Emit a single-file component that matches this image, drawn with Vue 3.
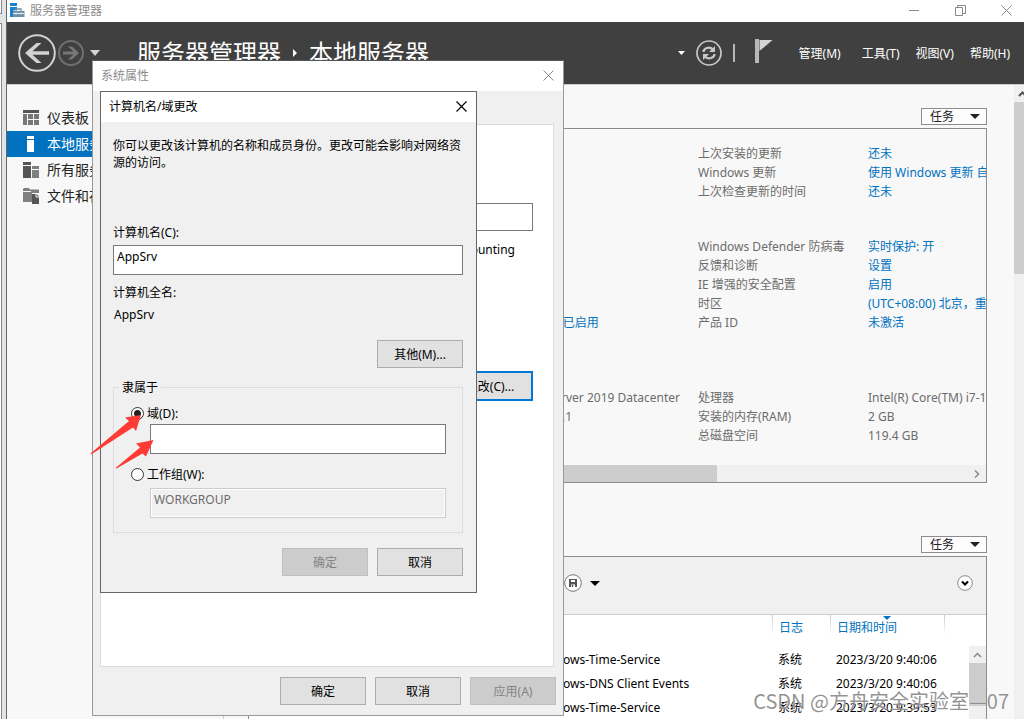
<script setup>
import { ref } from 'vue'

const computerName = ref('AppSrv')
const domain = ref('')
const membership = ref('domain')

const navItems = [
  { id: 'dash', label: '仪表板' },
  { id: 'local', label: '本地服务器', active: true },
  { id: 'all', label: '所有服务器' },
  { id: 'files', label: '文件和存储服务' },
]

const menus = ['工具(T)', '视图(V)', '帮助(H)']

const groups = [
  {
    id: 'updates',
    rows: [
      { label: '上次安装的更新', value: '还未', link: true },
      { label: 'Windows 更新', value: '使用 Windows 更新 自动下载更新', link: true },
      { label: '上次检查更新的时间', value: '还未', link: true },
    ],
  },
  {
    id: 'security',
    rows: [
      { label: 'Windows Defender 防病毒', value: '实时保护: 开', link: true },
      { label: '反馈和诊断', value: '设置', link: true },
      { label: 'IE 增强的安全配置', value: '启用', link: true },
      { label: '时区', value: '(UTC+08:00) 北京，重庆，香港', link: true },
      { left: '192.168.100.101, IPv6 已启用', leftLink: true, label: '产品 ID', value: '未激活', link: true },
    ],
  },
  {
    id: 'hardware',
    rows: [
      { left: 'Microsoft Windows Server 2019 Datacenter', label: '处理器', value: 'Intel(R) Core(TM) i7-10750H' },
      { left: 'VMware Inc. VMware7,1', label: '安装的内存(RAM)', value: '2 GB' },
      { label: '总磁盘空间', value: '119.4 GB' },
    ],
  },
]

const events = [
  { source: 'Microsoft-Windows-Time-Service', log: '系统', date: '2023/3/20 9:40:06' },
  { source: 'Microsoft-Windows-DNS Client Events', log: '系统', date: '2023/3/20 9:40:06' },
  { source: 'Microsoft-Windows-Time-Service', log: '系统', date: '2023/3/20 9:39:53' },
]
</script>

<template>
  <div class="desktop">
    <div class="edge"><i class="edge-top"></i><i class="edge-rest"></i></div>

    <div class="manager">
      <header class="titlebar">
        <svg class="app-icon" width="15" height="15" viewBox="0 0 15 15">
          <path d="M0 0h7v3H0zM0 4h7v2L3 8v6H0z" fill="#1583d0" />
          <path d="M3 8h11.500v6H3z" fill="#6f90a5" />
          <path d="M6 8V6h5v2" fill="none" stroke="#6f90a5" stroke-width="1.300" />
          <path d="M3 10.500h11.500M6 9.500v2M11 9.500v2" stroke="#e6eef2" stroke-width="1" />
        </svg>
        <span class="app-title">服务器管理器</span>
        <div class="controls">
          <button type="button" aria-label="最小化"><svg width="11" height="11"><path d="M0 5.500h10" stroke="#888" /></svg></button>
          <button type="button" aria-label="还原"><svg width="11" height="11"><path d="M.5 2.500h7v8h-7zM2.500 2.500v-2h8v8h-3" fill="none" stroke="#888" /></svg></button>
          <button type="button" aria-label="关闭"><svg width="11" height="11"><path d="M.5.5l10 10M10.500.5l-10 10" stroke="#888" /></svg></button>
        </div>
      </header>

      <div class="banner">
        <button type="button" class="round" aria-label="后退">
          <svg width="38" height="38" viewBox="0 0 38 38">
            <circle cx="19" cy="19" r="17.800" fill="none" stroke="#d2d2d2" stroke-width="2" />
            <path d="M31 17.200H14.500L23.500 9h-5L7 19l11.500 10h5L14.500 20.800H31z" fill="#d2d2d2" />
          </svg>
        </button>
        <button type="button" class="round forward" aria-label="前进">
          <svg width="26" height="26" viewBox="0 0 26 26">
            <circle cx="13" cy="13" r="12" fill="none" stroke="#707070" stroke-width="2" />
            <path d="M5 11.500h10.500L10 6.500h4L21 13l-7 6.500h-4l5.500-5H5z" fill="#777" />
          </svg>
        </button>
        <svg class="history" width="10" height="6"><path d="M0 0h10L5 6z" fill="#d2d2d2" /></svg>
        <h1 class="crumbs">
          <span>服务器管理器</span>
          <svg width="4" height="8"><path d="M0 0l4 4-4 4z" fill="#fff" /></svg>
          <span>本地服务器</span>
        </h1>
        <div class="tools">
          <svg width="8" height="4"><path d="M0 0h7L3.500 4z" fill="#fff" /></svg>
          <button type="button" class="round refresh" aria-label="刷新">
            <svg width="26" height="26" viewBox="0 0 26 26">
              <circle cx="13" cy="13" r="12" fill="none" stroke="#c8c8c8" stroke-width="1.700" />
              <path d="M7.500 12c0-4 6-6 9.500-2.500M18.500 14c0 4-6 6-9.500 2.500" fill="none" stroke="#c8c8c8" stroke-width="2.200" />
              <path d="M19 6v6h-6zM7 20v-6h6z" fill="#c8c8c8" />
            </svg>
          </button>
          <i class="divider"></i>
          <button type="button" class="round flag" aria-label="通知">
            <svg width="18" height="24" viewBox="0 0 18 24">
              <path d="M0 0h4v24H0z" fill="#b8b8b8" />
              <path d="M4.500 1H17.500L4.500 12z" fill="#d4d4d4" />
            </svg>
          </button>
          <button type="button" class="menu manage">管理(M)</button>
          <button v-for="m in menus" :key="m" type="button" class="menu">{{ m }}</button>
        </div>
      </div>

      <div class="body">
        <nav class="sidebar">
          <a v-for="n in navItems" :key="n.id" href="#" :class="['nav', { active: n.active }]">
            <svg width="16" height="16" viewBox="0 0 16 16">
              <g v-if="n.id === 'dash'">
                <path d="M0 0h16v3H0z" fill="#555" />
                <path d="M0 4h4v11H0zM5 4h5v5H5zM11 4h5v5h-5zM5 10h5v5H5zM11 10h5v5h-5z" fill="#777" />
              </g>
              <path v-else-if="n.id === 'local'" d="M4 0h7v3H4zM4 4h7v12H4z" fill="#fff" />
              <g v-else-if="n.id === 'all'">
                <path d="M0 0h8v3H0zM0 4h8v12H0z" fill="#555" />
                <path d="M9 4h7v3H9zM9 8h7v8H9z" fill="#808080" />
              </g>
              <g v-else>
                <path d="M0 1l1-1h5l1 1.500h9V5H9v9H0V4h8V3H0z" fill="#808080" />
                <path d="M9 6h4.500L16 8.500V16H9z" fill="#555" />
                <path d="M13 6v3h3" fill="none" stroke="#f8f8f8" />
              </g>
            </svg>
            <span>{{ n.label }}</span>
          </a>
        </nav>

        <main class="content">
          <section>
            <div class="section-head">
              <button type="button" class="tasks">任务<svg width="10" height="5"><path d="M0 0h10L5 5z" fill="#222" /></svg></button>
            </div>
            <div class="panel props">
              <div v-for="g in groups" :key="g.id" :class="['group', g.id]">
                <div v-for="r in g.rows" :key="r.label" class="row">
                  <span class="left" :class="{ link: r.leftLink }">{{ r.left }}</span>
                  <span>{{ r.label }}</span>
                  <a v-if="r.link" href="#" class="link">{{ r.value }}</a>
                  <span v-else>{{ r.value }}</span>
                </div>
              </div>
              <div class="hscroll">
                <i></i>
                <svg width="6" height="8"><path d="M1 .5L4.500 4 1 7.500" fill="none" stroke="#888" stroke-width="1.500" /></svg>
              </div>
            </div>
          </section>

          <section class="events">
            <div class="section-head">
              <button type="button" class="tasks">任务<svg width="10" height="5"><path d="M0 0h10L5 5z" fill="#222" /></svg></button>
            </div>
            <div class="panel">
              <div class="toolbar">
                <button type="button" class="round save" aria-label="保存查询">
                  <svg width="18" height="18" viewBox="0 0 18 18">
                    <circle cx="9" cy="9" r="8.300" fill="#fff" stroke="#777" />
                    <path d="M5 5h8v8H5z" fill="#555" />
                    <path d="M7 6h4v2H7zM7 10.500h4V13H7z" fill="#fff" />
                    <path d="M7.800 11h1.400v2H7.800z" fill="#555" />
                  </svg>
                </button>
                <svg width="10" height="5"><path d="M0 0h10L5 5z" fill="#000" /></svg>
                <button type="button" class="round expand" aria-label="展开">
                  <svg width="16" height="16" viewBox="0 0 16 16">
                    <circle cx="8" cy="8" r="7.300" fill="#fff" stroke="#888" />
                    <path d="M5 6.500l3 3 3-3" fill="none" stroke="#000" stroke-width="2" />
                  </svg>
                </button>
              </div>
              <div class="table-wrap">
                <table>
                  <thead>
                    <tr>
                      <th class="source"></th>
                      <th class="log">日志</th>
                      <th class="date">日期和时间<svg class="sort" width="8" height="4"><path d="M0 0h8L4 4z" fill="#0072c6" /></svg></th>
                      <th class="end"></th>
                    </tr>
                  </thead>
                  <tbody>
                    <tr v-for="(e, i) in events" :key="i">
                      <td class="source">{{ e.source }}</td>
                      <td>{{ e.log }}</td>
                      <td>{{ e.date }}</td>
                      <td></td>
                    </tr>
                  </tbody>
                </table>
                <div class="inner-scroll">
                  <svg width="9" height="6"><path d="M1 5l3.500-3.500L8 5" fill="none" stroke="#888" stroke-width="1.500" /></svg>
                  <i></i>
                </div>
              </div>
            </div>
          </section>
        </main>

        <div class="vscroll">
          <svg width="10" height="17"><path d="M5 11l3.500-3.500L12 11" fill="none" stroke="#555" stroke-width="2" /></svg>
          <i></i>
        </div>
      </div>
    </div>

    <section class="dialog system" aria-label="系统属性">
      <header class="dialog-title muted">
        <h2>系统属性</h2>
        <button type="button" aria-label="关闭"><svg width="11" height="11"><path d="M.5.5l10 10M10.500.5l-10 10" stroke="#888" /></svg></button>
      </header>
      <div class="tab-page">
        <input class="description" type="text" aria-label="计算机描述" />
        <p class="example">举例: "IIS Production Server" 或 "Accounting</p>
        <button type="button" class="push focused">更改(C)...</button>
      </div>
      <div class="actions">
        <button type="button" class="push">确定</button>
        <button type="button" class="push">取消</button>
        <button type="button" class="push" disabled>应用(A)</button>
      </div>
    </section>

    <section class="dialog rename" aria-label="计算机名/域更改">
      <header class="dialog-title">
        <h2>计算机名/域更改</h2>
        <button type="button" aria-label="关闭"><svg width="11" height="11"><path d="M.5.5l10 10M10.500.5l-10 10" stroke="#000" stroke-width="1.200" /></svg></button>
      </header>
      <form class="form" @submit.prevent>
        <p class="intro">你可以更改该计算机的名称和成员身份。更改可能会影响对网络资源的访问。</p>
        <label for="computer-name">计算机名(C):</label>
        <input id="computer-name" v-model="computerName" class="field" type="text" />
        <p class="full-label">计算机全名:</p>
        <p class="full-name">AppSrv</p>
        <button type="button" class="push more">其他(M)...</button>
        <fieldset>
          <legend>隶属于</legend>
          <label class="radio"><input v-model="membership" type="radio" name="member" value="domain" />域(D):</label>
          <input v-model="domain" class="field" type="text" aria-label="域" />
          <label class="radio second"><input v-model="membership" type="radio" name="member" value="workgroup" />工作组(W):</label>
          <input class="field" type="text" value="WORKGROUP" aria-label="工作组" disabled />
        </fieldset>
        <div class="form-actions">
          <button type="button" class="push" disabled>确定</button>
          <button type="button" class="push">取消</button>
        </div>
      </form>
    </section>

    <svg class="arrows" width="70" height="60" viewBox="0 0 70 60" aria-hidden="true">
      <path d="M51 5L35 7.500l4 3.500L.5 43.500l1 .8L43 17.500l3 3.500z" fill="#ff3b36" />
      <path d="M63.500 30L46 33.500l4 4L25.500 58l1 .6L52.500 43.500l3.500 3z" fill="#ff3b36" />
    </svg>

    <div class="watermark">CSDN @方舟安全实验室—07</div>
  </div>
</template>

<style>
body {
  margin: 0;
  overflow: hidden;
}
</style>

<style scoped>
* {
  box-sizing: border-box;
}
.desktop {
  position: relative;
  display: flex;
  height: 100vh;
  overflow: hidden;
  background: #e2e5e8;
  color: #000;
  font: 12px/17px "Noto Sans", "Noto Sans CJK SC", sans-serif;
}
h1, h2, p {
  margin: 0;
  font-weight: 400;
}
button {
  font: inherit;
  color: inherit;
  cursor: pointer;
}
svg {
  display: block;
  flex: none;
}
a {
  text-decoration: none;
}
.edge {
  flex: none;
  display: flex;
  flex-direction: column;
  gap: 9px;
  width: 7px;
  border-right: 1px solid #666;
}
.edge i {
  width: 2px;
  border-right: 1px solid #888;
  background: #fff;
}
.edge-top {
  height: 14px;
  border-bottom: 1px solid #888;
}
.edge-rest {
  flex: 1;
  border-top: 1px solid #888;
}
.manager {
  flex: 1;
  min-width: 0;
  display: flex;
  flex-direction: column;
}
.titlebar {
  flex: none;
  display: flex;
  align-items: center;
  height: 22px;
  padding: 0 12px 2px 3px;
  background: #fff;
  color: #8c8c8c;
}
.app-title {
  margin-left: 5px;
}
.controls {
  display: flex;
  gap: 35px;
  margin-left: auto;
}
.controls button,
.round,
.menu,
.dialog-title button {
  padding: 0;
  border: 0;
  background: none;
}
.banner {
  flex: none;
  display: flex;
  align-items: center;
  height: 62px;
  padding: 0 14px 0 11px;
  background: #404040;
  color: #fff;
}
.forward {
  margin-left: 2px;
}
.history {
  margin-left: 6px;
}
.crumbs {
  display: flex;
  align-items: center;
  gap: 12px;
  margin-left: 37px;
  font-size: 24px;
  line-height: 36px;
  white-space: nowrap;
}
.tools {
  display: flex;
  align-items: center;
  gap: 16px;
  margin-left: auto;
  white-space: nowrap;
}
.refresh {
  margin-left: -6px;
}
.divider {
  width: 2px;
  height: 18px;
  margin-left: -5px;
  background: #b8b8b8;
}
.flag {
  margin: 0 6px 4px 4px;
}
.manage {
  margin: 0 5px 0 4px;
}
.body {
  flex: 1;
  min-height: 0;
  display: flex;
  border-top: 1px solid #ccc;
  background: #f8f8f8;
}
.sidebar {
  flex: none;
  width: 217px;
  padding-top: 20px;
  border-right: 1px solid #ccc;
}
.nav {
  display: flex;
  align-items: center;
  gap: 8px;
  height: 26px;
  padding-left: 16px;
  color: #222;
  font-size: 14px;
  white-space: nowrap;
}
.nav span {
  padding-bottom: 2px;
}
.nav.active {
  background: #0072c0;
  color: #fff;
}
.content {
  flex: 1;
  min-width: 0;
  overflow: hidden;
  padding: 23px 27px 0 24px;
}
.section-head {
  display: flex;
  justify-content: flex-end;
  margin-bottom: 3px;
}
.tasks {
  display: flex;
  align-items: center;
  justify-content: space-between;
  width: 66px;
  height: 17px;
  padding: 0 6px 0 8px;
  border: 1px solid #8c8c8c;
  background: #fdfdfd;
  color: #222;
  line-height: 15px;
}
.panel {
  border: 1px solid #8c8c8c;
}
.props {
  padding-top: 15px;
  overflow: hidden;
  color: #6c6c6c;
}
.group {
  padding-left: 188px;
  margin-bottom: 36px;
}
.security {
  margin-bottom: 56px;
}
.hardware {
  margin-bottom: 20px;
}
.row {
  display: grid;
  grid-template-columns: 261px 170px minmax(0, 1fr);
  line-height: 19px;
  white-space: nowrap;
}
.link {
  color: #0072c0;
}
.hscroll {
  display: flex;
  align-items: center;
  justify-content: space-between;
  height: 17px;
  padding-right: 6px;
  background: #f0f0f0;
}
.hscroll i {
  width: 64%;
  height: 17px;
  background: #cdcdcd;
}
.events {
  margin-top: 53px;
}
.toolbar {
  display: flex;
  align-items: center;
  height: 58px;
  padding: 0 13px 5px 315px;
  border-bottom: 1px solid #ccc;
  background: #f0f0f0;
}
.save {
  margin-right: 8px;
}
.expand {
  margin-left: auto;
}
.table-wrap {
  position: relative;
  background: #fff;
}
table {
  width: 100%;
  border-collapse: collapse;
  table-layout: fixed;
}
th, td {
  padding: 0 0 0 6px;
  height: 24px;
  text-align: left;
  font-weight: 400;
  white-space: nowrap;
}
th {
  position: relative;
  height: 32px;
  padding: 0 0 8px 7px;
  background: linear-gradient(#ccc, #fff 20px) left / 1px 100% no-repeat;
  color: #0072c0;
}
th.source {
  background: none;
}
.log {
  width: 58px;
}
.date {
  width: 114px;
}
.end {
  width: 42px;
}
.source {
  padding-left: 228px;
}
.sort {
  position: absolute;
  top: 1px;
  left: 53px;
}
.inner-scroll {
  position: absolute;
  top: 31px;
  right: 0;
  bottom: 0;
  display: flex;
  flex-direction: column;
  align-items: center;
  gap: 5px;
  width: 17px;
  padding-top: 6px;
  background: #f0f0f0;
}
.inner-scroll i {
  width: 17px;
  height: 43px;
  background: #cdcdcd;
}
.vscroll {
  flex: none;
  width: 10px;
  background: #f0f0f0;
}
.vscroll i {
  display: block;
  height: 172px;
  background: #cdcdcd;
}
.dialog {
  position: absolute;
  display: flex;
  flex-direction: column;
  background: #f0f0f0;
}
.system {
  top: 60px;
  left: 92px;
  width: 472px;
  border: 1px solid #999;
  border-top-color: #555;
}
.rename {
  top: 91px;
  left: 100px;
  width: 377px;
  border: 1px solid #666;
}
.dialog-title {
  display: flex;
  align-items: center;
  justify-content: space-between;
  height: 30px;
  padding: 0 9px 1px 8px;
  background: #fff;
}
.dialog-title h2 {
  font-size: 12px;
}
.muted {
  color: #8c8c8c;
}
.tab-page {
  display: flex;
  flex-direction: column;
  align-items: flex-end;
  height: 543px;
  margin: 33px 9px 0 7px;
  padding: 78px 20px 0;
  border: 1px solid #dcdcdc;
  background: #fff;
}
.description {
  width: 280px;
  height: 28px;
  border: 1px solid #7a7a7a;
}
.example {
  margin: 10px 18px 0 0;
  white-space: nowrap;
}
.push {
  width: 86px;
  height: 28px;
  padding: 0;
  border: 1px solid #adadad;
  background: #e1e1e1;
}
.push:disabled {
  border-color: #bfbfbf;
  background: #ccc;
  color: #838383;
}
.focused {
  height: 30px;
  margin-top: 113px;
  border: 2px solid #0078d7;
}
.actions {
  display: flex;
  justify-content: flex-end;
  gap: 9px;
  padding: 10px 7px 10px;
}
.form {
  display: flex;
  flex-direction: column;
  padding: 15px 13px 16px 12px;
}
.intro {
  margin-bottom: 53px;
}
.field {
  width: 100%;
  height: 30px;
  padding: 0 3px 7px;
  border: 1px solid #7a7a7a;
  background: #fff;
  color: #000;
  font: inherit;
}
.form > .field {
  margin-top: 4px;
}
.field:disabled {
  border-color: #ccc;
  background: #f0f0f0;
  box-shadow: inset 0 0 0 1px #fff;
  color: #6d6d6d;
}
.full-label {
  margin-top: 9px;
}
.full-name {
  margin: 5px 0 17px 1px;
}
.more {
  align-self: flex-end;
}
fieldset {
  margin: 11px 0 0;
  padding: 9px 16px 14px 17px;
  border: 1px solid #dcdcdc;
}
legend {
  margin-left: -12px;
  padding: 0 3px;
}
.radio {
  display: flex;
  align-items: center;
  gap: 3px;
  height: 17px;
}
.radio input {
  appearance: none;
  width: 13px;
  height: 13px;
  margin: 0;
  border: 1px solid #333;
  border-radius: 50%;
  background: #fff;
}
.radio input:checked {
  background: radial-gradient(circle, #222 3px, #fff 4px);
}
fieldset .field {
  display: block;
  width: auto;
  min-width: 296px;
  margin: 2px 0 0 19px;
}
.second {
  margin-top: 12px;
}
.second + .field {
  margin-top: 5px;
}
.form-actions {
  display: flex;
  justify-content: flex-end;
  gap: 9px;
  margin-top: 15px;
}
.arrows {
  position: absolute;
  top: 410px;
  left: 90px;
  pointer-events: none;
}
.watermark {
  position: absolute;
  right: 15px;
  bottom: 4px;
  color: rgba(110, 110, 110, 0.75);
  font: 400 20px/28px "Noto Sans CJK SC", sans-serif;
  white-space: nowrap;
  text-shadow: 0 0 1px #fff;
}
</style>
